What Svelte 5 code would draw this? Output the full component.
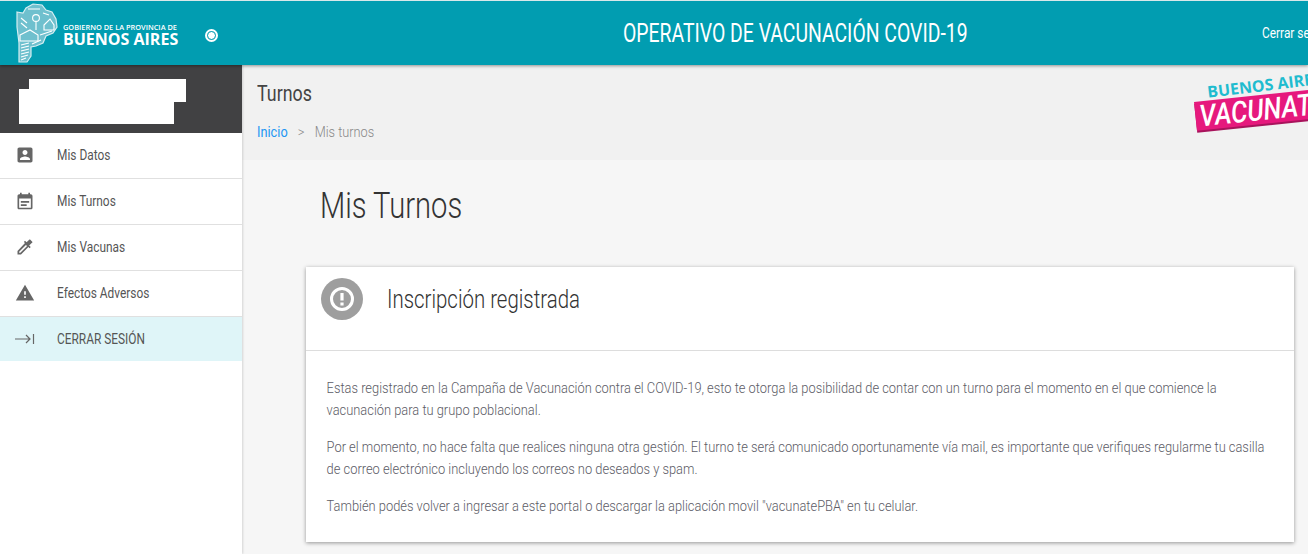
<script lang="ts">
  const menu = [
    { label: "Mis Datos", icon: "M19 3H5c-1.1 0-2 .9-2 2v14c0 1.1.9 2 2 2h14c1.1 0 2-.9 2-2V5c0-1.1-.9-2-2-2zm-7 3c1.66 0 3 1.34 3 3s-1.34 3-3 3-3-1.34-3-3 1.34-3 3-3zm6 12H6v-1c0-2 4-3.1 6-3.1s6 1.1 6 3.1v1z" },
    { label: "Mis Turnos", icon: "M17 12H7v2h10v-2zm-3 4H7v2h7v-2zM19 4h-1V2h-2v2H8V2H6v2H5c-1.11 0-2 .9-2 2v14c0 1.1.89 2 2 2h14c1.1 0 2-.9 2-2V6c0-1.1-.9-2-2-2zm0 16H5V9h14v11z" },
    { label: "Mis Vacunas", icon: "M20.7 5.6l-2.3-2.3c-.4-.4-1-.4-1.4 0l-3.1 3.1-1.9-1.9-1.4 1.4 1.4 1.4L3 16.8V21h4.2l8.9-8.9 1.4 1.4 1.4-1.4-1.9-1.9 3.1-3.1c.9-.4.9-1.1.6-1.5zM6.4 19H5v-1.4l8.1-8.1 1.4 1.4L6.4 19z" },
    { label: "Efectos Adversos", icon: "M1 21h22L12 2 1 21zm12-3h-2v-2h2v2zm0-4h-2v-4h2v4z" },
  ];
</script>

<div class="page">
  <header class="topbar">
    <div class="brand">
      <svg class="map" viewBox="0 0 42 60" width="42" height="60">
        <path d="M1 9 L7 10 L10 5 L17 1 L26 2 L30 7 L36 9 L40 16 L41 24 L37 30 L30 33 L27 40 L20 43 L15 44 L15 53 L11 59 L3 59 L3 40 L1 24 Z" fill="#6fc0ce" stroke="#d5eef2" stroke-width="1.2" />
        <g stroke="#fff" stroke-width="1.1" fill="none">
          <path d="M4 32 L14 27 L22 32 L22 38 L4 38 Z" />
          <circle cx="20" cy="15" r="3.4" />
          <path d="M20 19 V27 M28 22 L34 16 L38 22 V27 H28 Z" />
          <path d="M12 6 L24 6 M27 10 L33 12 M5 15 L11 20 M5 20 L11 25" />
          <path d="M5 42 L13 40 M5 45 L13 43 M5 48 L13 46 M5 51 L13 49 M5 54 L12 52 M5 57 L10 55" />
          <path d="M24 32 L36 28 M16 41 L25 37" />
        </g>
      </svg>
      <div class="brand-text">
        <span class="brand-small">GOBIERNO DE LA PROVINCIA DE</span>
        <span class="brand-big">BUENOS AIRES</span>
      </div>
      <span class="radio"></span>
    </div>
    <h1 class="app-title"><span>OPERATIVO DE VACUNACIÓN COVID-19</span></h1>
    <span class="logout"><span>Cerrar sesión</span></span>
  </header>

  <div class="body">
    <aside class="sidebar">
      <div class="user">
        <div class="mask-a"></div>
        <div class="mask-b"></div>
      </div>
      <nav>
        {#each menu as item}
          <div class="item">
            <svg viewBox="0 0 24 24" width="20" height="20"><path d={item.icon} fill="#666" fill-rule="evenodd" /></svg>
            <span>{item.label}</span>
          </div>
        {/each}
        <div class="item close">
          <svg viewBox="0 0 20 12" width="20" height="12"><path d="M0 6h15M11 2l4 4-4 4M18.5 1v10" stroke="#666" stroke-width="1.2" fill="none" /></svg>
          <span>CERRAR SESIÓN</span>
        </div>
      </nav>
    </aside>

    <main class="content">
      <section class="crumbs">
        <div>
          <h2>Turnos</h2>
          <div class="path"><a href="#top">Inicio</a><i>&gt;</i><span>Mis turnos</span></div>
        </div>
        <div class="vac">
          <span class="vac-top">BUENOS AIRES</span>
          <span class="vac-main"><span>VACUNATE</span></span>
        </div>
      </section>
      <section class="inner">
        <h3>Mis Turnos</h3>
        <article class="card">
          <div class="card-head">
            <span class="alert">
              <svg viewBox="0 0 24 24" width="24" height="24">
                <circle cx="12" cy="12" r="10.5" fill="none" stroke="#fff" stroke-width="3" />
                <path d="M10.4 6h3.2v7.6h-3.2zM10.4 15.4h3.2v3h-3.2z" fill="#fff" />
              </svg>
            </span>
            <h4>Inscripción registrada</h4>
          </div>
          <div class="card-body">
            <p>Estas registrado en la Campaña de Vacunación contra el COVID-19, esto te otorga la posibilidad de contar con un turno para el momento en el que comience la vacunación para tu grupo poblacional.</p>
            <p>Por el momento, no hace falta que realices ninguna otra gestión. El turno te será comunicado oportunamente vía mail, es importante que verifiques regularme tu casilla de correo electrónico incluyendo los correos no deseados y spam.</p>
            <p>También podés volver a ingresar a este portal o descargar la aplicación movil "vacunatePBA" en tu celular.</p>
          </div>
        </article>
      </section>
    </main>
  </div>
</div>

<style>
  :global(body) {
    margin: 0;
    overflow: hidden;
  }

  .page {
    width: 1308px;
    height: 554px;
    overflow: hidden;
    font-family: "Roboto", sans-serif;
    font-weight: 300;
    color: #555;
  }

  .topbar {
    position: relative;
    z-index: 2;
    box-sizing: border-box;
    height: 65px;
    border-top: 1px solid #d8e8ea;
    background: #019db1;
    box-shadow: 0 1px 3px #0006;
    display: flex;
    align-items: center;
    color: #fff;
  }

  .brand {
    display: flex;
    align-items: center;
    padding-left: 16px;
    width: 226px;
    flex: none;
    box-sizing: border-box;
  }

  .brand-text {
    display: flex;
    flex-direction: column;
    margin: 5px 0 0 5px;
    font-family: "Open Sans", sans-serif;
    line-height: 1;
  }

  .brand-small {
    font-size: 7.4px;
    font-weight: 600;
    white-space: nowrap;
  }

  .brand-big {
    font-size: 16px;
    font-weight: 700;
    white-space: nowrap;
  }

  .radio {
    width: 7px;
    height: 7px;
    margin: 4px 0 0 29px;
    border: 1px solid #019db1;
    outline: 2px solid #fff;
    border-radius: 50%;
    background: #fff;
    flex: none;
  }

  .app-title {
    flex: 1;
    margin: 0;
    padding-left: 102px;
    font-size: 25px;
    font-weight: 400;
    text-align: center;
    white-space: nowrap;
  }

  .app-title span {
    display: inline-block;
    transform: scaleX(0.775);
  }

  .logout {
    width: 46px;
    overflow: hidden;
    white-space: nowrap;
    font-size: 14px;
    font-weight: 400;
    flex: none;
  }

  .logout span {
    display: inline-block;
    transform: scaleX(0.85);
    transform-origin: left;
  }

  .body {
    display: flex;
    height: 489px;
  }

  .sidebar {
    width: 242px;
    flex: none;
    background: #fff;
    box-shadow: 1px 0 2px #0002;
    z-index: 1;
  }

  .user {
    height: 68px;
    background: #414143;
    position: relative;
  }

  .mask-a {
    position: absolute;
    left: 29px;
    top: 14px;
    width: 157px;
    height: 23px;
    background: #fff;
  }

  .mask-b {
    position: absolute;
    left: 19px;
    top: 24px;
    width: 155px;
    height: 35px;
    background: #fff;
  }

  .item {
    height: 43px;
    padding: 0 0 2px 15px;
    border-bottom: 1px solid #e0e0e0;
    display: flex;
    align-items: center;
    gap: 22px;
    font-size: 14px;
    font-weight: 400;
    color: #555;
  }

  .item svg {
    flex: none;
  }

  .item span {
    transform: scaleX(0.85);
    transform-origin: left;
    white-space: nowrap;
  }

  .close {
    background: #dff5f8;
    border-bottom: 0;
    height: 44px;
    padding-bottom: 0;
  }

  .content {
    flex: 1;
    background: #f6f6f6;
    min-width: 0;
  }

  .crumbs {
    height: 95px;
    background: #f1f1f1;
    padding-left: 15px;
    display: flex;
    justify-content: space-between;
  }

  h2 {
    margin: 16px 0 0;
    font-size: 22px;
    font-weight: 400;
    color: #444;
    transform: scaleX(0.81);
    transform-origin: left;
  }

  .path {
    margin-top: 17px;
    font-size: 15px;
    color: #888;
    white-space: nowrap;
    transform: scaleX(0.85);
    transform-origin: left;
  }

  .path a {
    color: #2196f3;
    font-weight: 400;
    text-decoration: none;
  }

  .path i {
    margin: 0 12px;
    font-style: normal;
  }

  .vac {
    position: relative;
    width: 115px;
    overflow: hidden;
    height: 95px;
  }

  .vac-top {
    position: absolute;
    left: 13px;
    top: 16px;
    font-family: "Open Sans", sans-serif;
    font-size: 16px;
    font-weight: 700;
    color: #1fbccf;
    white-space: nowrap;
    transform: rotate(-7deg);
    transform-origin: left top;
  }

  .vac-main {
    position: absolute;
    left: 1px;
    top: 37px;
    padding: 0 4px;
    width: 140px;
    background: #e6197d;
    color: #fff;
    font-size: 30px;
    font-weight: 500;
    font-style: italic;
    line-height: 29px;
    white-space: nowrap;
    transform: rotate(-6deg);
    transform-origin: left top;
    box-shadow: 0 2px 0 #a8145c;
  }

  .vac-main span {
    display: inline-block;
    transform: scaleX(0.86);
    transform-origin: left;
  }

  .inner {
    padding: 0 14px 0 64px;
  }

  h3 {
    margin: 23px 0 0 14px;
    font-size: 36px;
    font-weight: 300;
    color: #333;
    line-height: 46px;
    transform: scaleX(0.81);
    transform-origin: left;
  }

  .card {
    margin-top: 38px;
    background: #fff;
    box-shadow: 0 1px 4px #0006;
    height: 275px;
    width: 988px;
  }

  .card-head {
    box-sizing: border-box;
    height: 84px;
    border-bottom: 1px solid #ddd;
    display: flex;
    align-items: flex-start;
    padding: 11px 0 0 15px;
  }

  .alert {
    flex: none;
    width: 42px;
    height: 42px;
    border-radius: 50%;
    background: #9e9e9e;
    display: grid;
    place-items: center;
  }

  h4 {
    margin: 7px 0 0 24px;
    font-size: 25px;
    font-weight: 300;
    color: #333;
    transform: scaleX(0.817);
    transform-origin: left;
    white-space: nowrap;
  }

  .card-body {
    box-sizing: border-box;
    width: 1128px;
    padding: 26px 0 0 24px;
    font-size: 15px;
    line-height: 22px;
    color: #5c5c66;
    transform: scaleX(0.858);
    transform-origin: left;
  }

  p {
    margin: 0 0 15px;
  }
</style>
